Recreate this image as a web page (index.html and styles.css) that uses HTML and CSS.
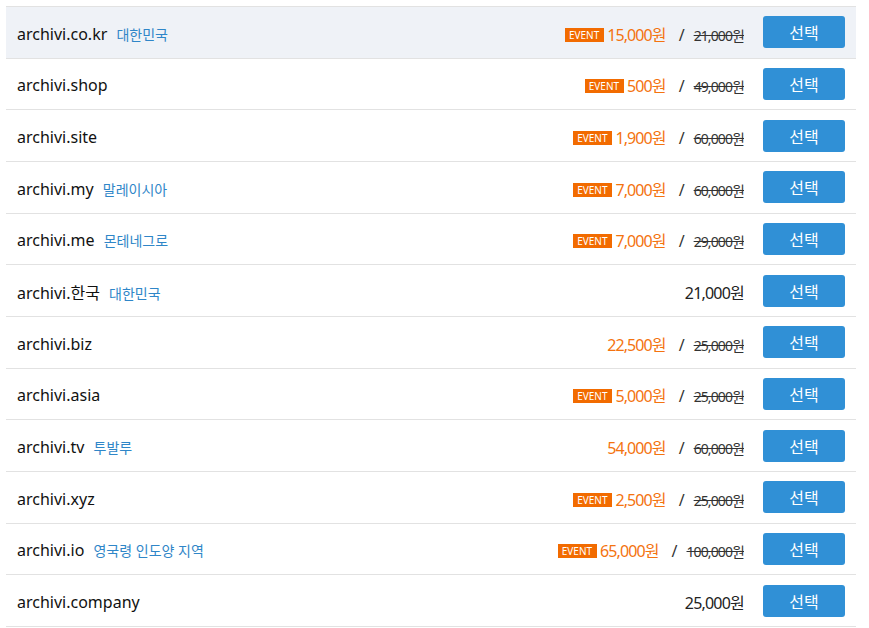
FILE: index.html
```html
<!DOCTYPE html>
<html lang="ko">
<head>
    <meta charset="UTF-8">
    <title>Domain List</title>
    <link rel="stylesheet" href="styles.css">
</head>
<body>
    <table class="domain-table">
        <tbody>
            <tr class="selected">
                <td class="name">archivi.co.kr <span class="country">대한민국</span></td>
                <td class="price"><span class="event">EVENT</span><span class="sale">15,000원</span><span class="slash">/</span><del>21,000원</del></td>
                <td class="action"><button class="select-btn">선택</button></td>
            </tr>
            <tr>
                <td class="name">archivi.shop</td>
                <td class="price"><span class="event">EVENT</span><span class="sale">500원</span><span class="slash">/</span><del>49,000원</del></td>
                <td class="action"><button class="select-btn">선택</button></td>
            </tr>
            <tr>
                <td class="name">archivi.site</td>
                <td class="price"><span class="event">EVENT</span><span class="sale">1,900원</span><span class="slash">/</span><del>60,000원</del></td>
                <td class="action"><button class="select-btn">선택</button></td>
            </tr>
            <tr>
                <td class="name">archivi.my <span class="country">말레이시아</span></td>
                <td class="price"><span class="event">EVENT</span><span class="sale">7,000원</span><span class="slash">/</span><del>60,000원</del></td>
                <td class="action"><button class="select-btn">선택</button></td>
            </tr>
            <tr>
                <td class="name">archivi.me <span class="country">몬테네그로</span></td>
                <td class="price"><span class="event">EVENT</span><span class="sale">7,000원</span><span class="slash">/</span><del>29,000원</del></td>
                <td class="action"><button class="select-btn">선택</button></td>
            </tr>
            <tr>
                <td class="name">archivi.한국 <span class="country">대한민국</span></td>
                <td class="price"><span class="normal">21,000원</span></td>
                <td class="action"><button class="select-btn">선택</button></td>
            </tr>
            <tr>
                <td class="name">archivi.biz</td>
                <td class="price"><span class="sale">22,500원</span><span class="slash">/</span><del>25,000원</del></td>
                <td class="action"><button class="select-btn">선택</button></td>
            </tr>
            <tr>
                <td class="name">archivi.asia</td>
                <td class="price"><span class="event">EVENT</span><span class="sale">5,000원</span><span class="slash">/</span><del>25,000원</del></td>
                <td class="action"><button class="select-btn">선택</button></td>
            </tr>
            <tr>
                <td class="name">archivi.tv <span class="country">투발루</span></td>
                <td class="price"><span class="sale">54,000원</span><span class="slash">/</span><del>60,000원</del></td>
                <td class="action"><button class="select-btn">선택</button></td>
            </tr>
            <tr>
                <td class="name">archivi.xyz</td>
                <td class="price"><span class="event">EVENT</span><span class="sale">2,500원</span><span class="slash">/</span><del>25,000원</del></td>
                <td class="action"><button class="select-btn">선택</button></td>
            </tr>
            <tr>
                <td class="name">archivi.io <span class="country">영국령 인도양 지역</span></td>
                <td class="price"><span class="event">EVENT</span><span class="sale">65,000원</span><span class="slash">/</span><del>100,000원</del></td>
                <td class="action"><button class="select-btn">선택</button></td>
            </tr>
            <tr>
                <td class="name">archivi.company</td>
                <td class="price"><span class="normal">25,000원</span></td>
                <td class="action"><button class="select-btn">선택</button></td>
            </tr>
        </tbody>
    </table>
</body>
</html>
```

FILE: styles.css
```css
body {
    margin: 6px 13px 0 6px;
    font-family: "Noto Sans", "Noto Sans CJK KR", sans-serif;
    color: #222;
    background: #fff;
}
.domain-table {
    width: 850px;
    border-collapse: collapse;
    border-top: 1px solid #e2e2e2;
}
.domain-table td {
    height: 47.67px;
    padding: 3px 0 0;
    border-bottom: 1px solid #e2e2e2;
    vertical-align: middle;
}
.domain-table tr.selected td {
    background-color: #eff2f7;
}
.name {
    padding-left: 11px !important;
    font-size: 16px;
    color: #111;
}
.country {
    margin-left: 5px;
    font-size: 14px;
    color: #2f86c8;
}
.price {
    text-align: right;
    white-space: nowrap;
    font-size: 16px;
}
.event {
    display: inline-block;
    background: #f26b00;
    color: #fff;
    font-size: 10px;
    line-height: 14px;
    padding: 0 5px 0 4px;
    margin-right: 3px;
    vertical-align: 2px;
}
.sale {
    color: #f4730f;
    letter-spacing: -0.9px;
}
.normal {
    color: #222;
    letter-spacing: -0.8px;
}
.slash {
    display: inline-block;
    margin: 0 9px 0 13px;
    color: #333;
}
del {
    font-size: 14px;
    color: #333;
    letter-spacing: -0.9px;
}
.domain-table td.action {
    width: 82px;
    height: 50.67px;
    padding: 0 11px 0 19px;
}
.select-btn {
    display: block;
    width: 82px;
    height: 32px;
    border: none;
    border-radius: 3px;
    background: #3090d6;
    color: #fff;
    font-family: "Noto Sans CJK KR", sans-serif;
    font-size: 16px;
    cursor: pointer;
}
```
